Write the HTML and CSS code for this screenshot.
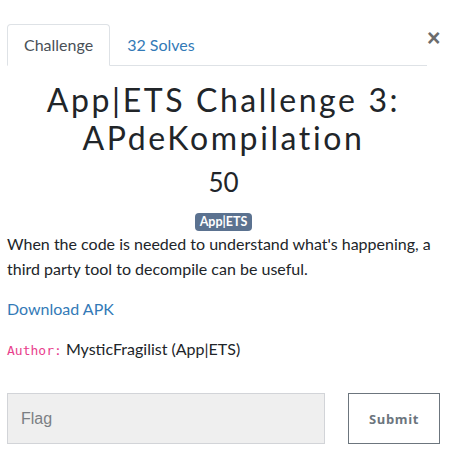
FILE: index.html
```html
<!DOCTYPE html>
<html>
<head>
<meta charset="utf-8">
<link rel="stylesheet" href="styles.css">
</head>
<body>
<div class="modal">
  <div class="header">
    <ul class="tabs">
      <li class="tab active">Challenge</li>
      <li class="tab link">32 Solves</li>
    </ul>
    <button class="close" aria-label="Close">&times;</button>
  </div>
  <h2 class="title">App|ETS Challenge 3: APdeKompilation</h2>
  <h3 class="value">50</h3>
  <div class="tags"><span class="badge">App|ETS</span></div>
  <p class="desc">When the code is needed to understand what's happening, a third party tool to decompile can be useful.</p>
  <p class="dl"><a href="#">Download APK</a></p>
  <p class="author"><code>Author:</code> MysticFragilist (App|ETS)</p>
  <div class="submit-row">
    <input class="flag" type="text" placeholder="Flag">
    <button class="submit">Submit</button>
  </div>
</div>
</body>
</html>
```
FILE: styles.css
```css
* { box-sizing: border-box; }
html, body { margin: 0; padding: 0; background: #fff; }
body {
  font-family: Lato, "Noto Sans", sans-serif;
  font-size: 16px;
  color: #212529;
}
.modal {
  width: 451px;
  padding: 24px 11px 0 7px;
}
.header {
  display: flex;
  align-items: flex-start;
}
.tabs {
  flex: 1;
  display: flex;
  list-style: none;
  margin: 0;
  padding: 0;
  border-bottom: 1px solid #dee2e6;
}
.tab {
  padding: 8px 16px;
  line-height: 24px;
  border: 1px solid transparent;
  border-radius: 4px 4px 0 0;
  margin-bottom: -1px;
}
.tab.active {
  color: #495057;
  border-color: #dee2e6 #dee2e6 #fff;
  background: #fff;
}
.tab.link {
  color: #337ab7;
  padding-left: 16px;
}
.close {
  width: 13px;
  margin-top: 2px;
  padding: 0;
  border: 0;
  background: none;
  font-family: Arial, "Liberation Sans", sans-serif;
  font-size: 23px;
  font-weight: bold;
  line-height: 24px;
  color: #6c6c6c;
  text-align: right;
}
.title {
  margin: 15px 0 0;
  text-align: center;
  font-size: 32px;
  font-weight: 400;
  line-height: 38px;
  letter-spacing: 2.6px;
  color: #212529;
}
.value {
  margin: 10px 0 0;
  text-align: center;
  font-size: 26px;
  font-weight: 400;
  line-height: 31px;
}
.tags {
  margin-top: 13px;
  text-align: center;
  line-height: 18px;
  height: 18px;
}
.badge {
  display: inline-block;
  padding: 0 5px;
  background: #5b7290;
  color: #fff;
  border-radius: 4px;
  font-size: 12.5px;
  font-weight: 700;
  line-height: 18px;
}
.desc {
  margin: 2px 0 0;
  line-height: 25px;
}
.dl {
  margin: 16px 0 0;
  line-height: 24px;
}
.dl a {
  color: #337ab7;
  text-decoration: none;
}
.author {
  margin: 16px 0 0;
  line-height: 24px;
}
.author code {
  font-family: "DejaVu Sans Mono", monospace;
  font-size: 13px;
  color: #e83e8c;
}
.submit-row {
  display: flex;
  align-items: center;
  gap: 23px;
  margin-top: 30px;
}
.flag {
  width: 318px;
  height: 51px;
  padding: 0 13px;
  background: #efefef;
  border: 1px solid #d2d4d8;
  font-family: Arial, "Liberation Sans", sans-serif;
  font-size: 16px;
  color: #495057;
  outline: none;
}
.flag::placeholder { color: #7b7f84; }
.submit {
  width: 92px;
  height: 51px;
  background: #fff;
  border: 1px solid #6c757d;
  font-family: "Open Sans", Lato, sans-serif;
  font-size: 13px;
  font-weight: 700;
  letter-spacing: 0.6px;
  color: #6c757d;
}
```
